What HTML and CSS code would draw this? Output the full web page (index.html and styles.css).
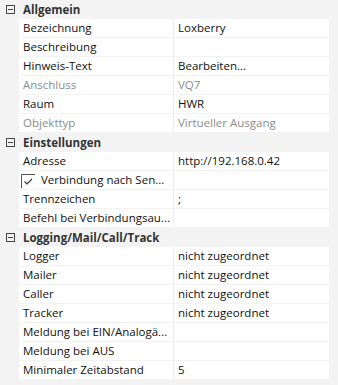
FILE: index.html
```html
<!doctype html>
<html lang="de">
<head>
  <meta charset="UTF-8">
  <title>Eigenschaften</title>
  <link rel="stylesheet" href="styles.css">
</head>
<body>
  <div class="props">
    <div class="group">
      <svg class="toggle" width="9" height="9" viewBox="0 0 9 9"><rect x="0.5" y="0.5" width="8" height="8" fill="none" stroke="#444"/><path d="M2 4.5h5" stroke="#444"/></svg>
      <span>Allgemein</span>
    </div>
    <div class="row"><div class="name">Bezeichnung</div><div class="val">Loxberry</div></div>
    <div class="row"><div class="name">Beschreibung</div><div class="val"></div></div>
    <div class="row"><div class="name">Hinweis-Text</div><div class="val">Bearbeiten...</div></div>
    <div class="row off"><div class="name">Anschluss</div><div class="val">VQ7</div></div>
    <div class="row"><div class="name">Raum</div><div class="val">HWR</div></div>
    <div class="row off"><div class="name">Objekttyp</div><div class="val">Virtueller Ausgang</div></div>

    <div class="group">
      <svg class="toggle" width="9" height="9" viewBox="0 0 9 9"><rect x="0.5" y="0.5" width="8" height="8" fill="none" stroke="#444"/><path d="M2 4.5h5" stroke="#444"/></svg>
      <span>Einstellungen</span>
    </div>
    <div class="row"><div class="name">Adresse</div><div class="val">http://192.168.0.42</div></div>
    <div class="row"><div class="name check">
      <svg class="box" width="14" height="14" viewBox="0 0 14 14"><path d="M0.5 14V0.5H14" fill="none" stroke="#555"/><path d="M3.5 7.5l2.5 2.5 5-5" fill="none" stroke="#333" stroke-width="1.1"/></svg>
      <span>Verbindung nach Sen...</span></div><div class="val"></div></div>
    <div class="row"><div class="name">Trennzeichen</div><div class="val">;</div></div>
    <div class="row"><div class="name">Befehl bei Verbindungsau...</div><div class="val"></div></div>

    <div class="group">
      <svg class="toggle" width="9" height="9" viewBox="0 0 9 9"><rect x="0.5" y="0.5" width="8" height="8" fill="none" stroke="#444"/><path d="M2 4.5h5" stroke="#444"/></svg>
      <span>Logging/Mail/Call/Track</span>
    </div>
    <div class="row"><div class="name">Logger</div><div class="val">nicht zugeordnet</div></div>
    <div class="row"><div class="name">Mailer</div><div class="val">nicht zugeordnet</div></div>
    <div class="row"><div class="name">Caller</div><div class="val">nicht zugeordnet</div></div>
    <div class="row"><div class="name">Tracker</div><div class="val">nicht zugeordnet</div></div>
    <div class="row"><div class="name">Meldung bei EIN/Analogä...</div><div class="val"></div></div>
    <div class="row"><div class="name">Meldung bei AUS</div><div class="val"></div></div>
    <div class="row"><div class="name">Minimaler Zeitabstand</div><div class="val">5</div></div>
  </div>
</body>
</html>
```
FILE: styles.css
```css
*{
	margin:0;
	padding:0;
	box-sizing:border-box;
}
body{
	background:#f3f3f3;
	font-family:"Open Sans","Noto Sans",sans-serif;
	font-size:11.5px;
	color:#111;
}
.props{
	display:flex;
	flex-direction:column;
	gap:1px;
	padding-bottom:1px;
}
.group{
	height:18px;
	display:flex;
	align-items:center;
	font-weight:bold;
	color:#333;
}
.group .toggle{
	margin:0 8px 0 6px;
}
.row{
	height:18px;
	width:310px;
	margin-left:19px;
	display:grid;
	grid-template-columns:154px 155px;
	gap:1px;
	background:#ededed;
}
.row .name,
.row .val{
	background:#fff;
	padding-left:4px;
	line-height:18px;
	white-space:nowrap;
	overflow:hidden;
}
.row.off{
	color:#8c8c8c;
}
.name.check{
	display:flex;
	align-items:center;
	padding-left:2px;
}
.name.check .box{
	margin-right:6px;
	margin-top:2px;
}
```
